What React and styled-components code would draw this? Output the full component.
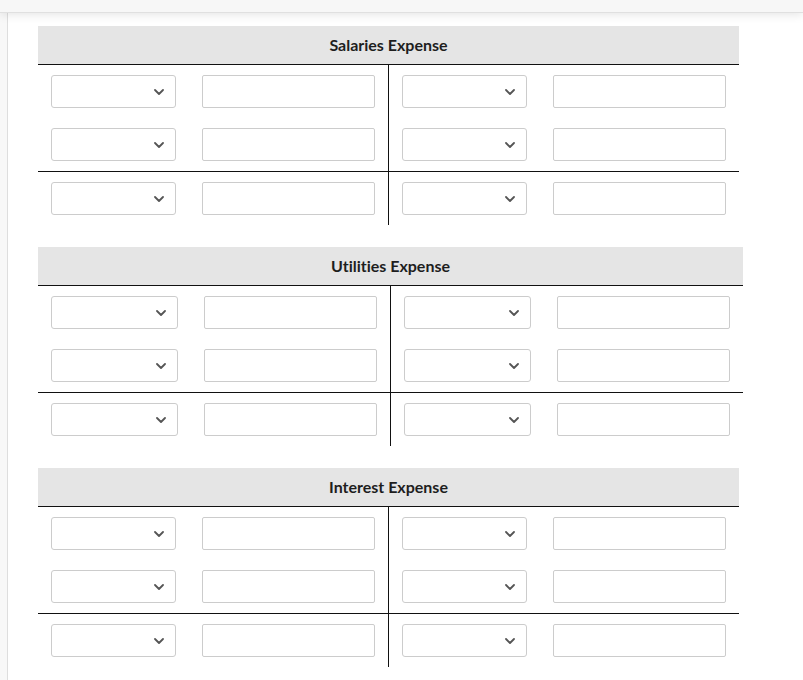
import React from "react";
import styled, { createGlobalStyle } from "styled-components";

const GlobalStyle = createGlobalStyle`
  html, body { margin: 0; padding: 0; background: #ffffff; }
  body { font-family: Lato, "Open Sans", Arial, sans-serif; }
  * { box-sizing: border-box; }
`;

const Page = styled.div`
  display: flex;
  flex-direction: column;
  min-height: 680px;
`;

const TopBar = styled.div`
  height: 13px;
  background: #f7f7f7;
  border-bottom: 1px solid #e0e0e0;
  box-shadow: 0 2px 10px rgba(0, 0, 0, 0.1);
  position: relative;
  z-index: 1;
`;

const Body = styled.div`
  flex: 1;
  display: flex;
`;

const SideStrip = styled.div`
  width: 8px;
  background: #f8f8f8;
  border-right: 1px solid #dedede;
`;

const Content = styled.main`
  display: flex;
  flex-direction: column;
  gap: 22px;
  padding: 13px 0 0 30px;
`;

const Table = styled.section`
  display: flex;
  flex-direction: column;
  width: max-content;
`;

const Header = styled.div`
  height: 39px;
  background: #e5e5e5;
  border-bottom: 1px solid #111;
  display: flex;
  align-items: center;
  justify-content: center;
  font-weight: 700;
  font-size: 16px;
  font-variant-ligatures: none;
  color: #1e1e1e;
  padding-bottom: 1px;
`;

const Group = styled.div`
  display: grid;
  grid-template-columns: auto auto;
  border-bottom: ${(p) => (p.$ruled ? "1px solid #111" : "none")};
`;

const Half = styled.div`
  display: flex;
  flex-direction: column;
  border-right: ${(p) => (p.$left ? "1px solid #111" : "none")};
`;

const Row = styled.div`
  display: grid;
  grid-template-columns: ${(p) => p.$sel}px 173px;
  column-gap: 26px;
  padding: 10px 13px;
`;

const SelectBox = styled.div`
  height: 33px;
  border: 1px solid #cccccc;
  border-radius: 3px;
  background: #fff;
  display: flex;
  align-items: center;
  justify-content: flex-end;
  padding-right: 11px;
`;

const TextBox = styled.input`
  height: 33px;
  width: 100%;
  border: 1px solid #cccccc;
  border-radius: 2px;
  background: #fff;
  margin: 0;
  padding: 0 6px;
  font: inherit;
  outline: none;
`;

const Chevron = () => (
  <svg width="10" height="6" viewBox="0 0 10 6" aria-hidden="true">
    <path d="M1 1 L5 5 L9 1" fill="none" stroke="#555" strokeWidth="1.8" strokeLinecap="round" strokeLinejoin="round" />
  </svg>
);

const Entry = ({ sel }) => (
  <Row $sel={sel}>
    <SelectBox>
      <Chevron />
    </SelectBox>
    <TextBox type="text" />
  </Row>
);

const Account = ({ title, sel }) => (
  <Table>
    <Header>{title}</Header>
    <Group $ruled>
      <Half $left>
        <Entry sel={sel} />
        <Entry sel={sel} />
      </Half>
      <Half>
        <Entry sel={sel} />
        <Entry sel={sel} />
      </Half>
    </Group>
    <Group>
      <Half $left>
        <Entry sel={sel} />
      </Half>
      <Half>
        <Entry sel={sel} />
      </Half>
    </Group>
  </Table>
);

export default function App() {
  return (
    <>
      <GlobalStyle />
      <Page>
        <TopBar />
        <Body>
          <SideStrip />
          <Content>
            <Account title="Salaries Expense" sel={125} />
            <Account title="Utilities Expense" sel={127} />
            <Account title="Interest Expense" sel={125} />
          </Content>
        </Body>
      </Page>
    </>
  );
}
